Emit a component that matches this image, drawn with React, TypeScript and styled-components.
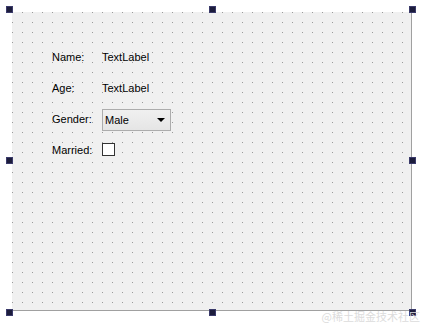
import styled, { createGlobalStyle } from 'styled-components';

const Global = createGlobalStyle`
  html, body {
    margin: 0;
    padding: 0;
    background: #ffffff;
  }
  body {
    font-family: "Liberation Sans", Arial, sans-serif;
    font-size: 11px;
    color: #000;
  }
`;

const Stage = styled.div`
  width: 426px;
  height: 323px;
  position: relative;
  box-sizing: border-box;
  padding: 12px 14px 12px 12px;
  background: #ffffff;
  overflow: hidden;
`;

const Canvas = styled.div`
  width: 400px;
  height: 299px;
  box-sizing: border-box;
  background-color: #f0f0f0;
  background-image: conic-gradient(at 1px 1px, transparent 270deg, #9a9a9a 270deg);
  background-size: 10px 10px;
  background-position: 0 0;
  border-right: 1px solid #a0a0a0;
  border-bottom: 1px solid #a0a0a0;
  padding: 29px 0 0 40px;
`;

const Handle = styled.div<{ $x: number; $y: number }>`
  position: absolute;
  left: ${p => p.$x}px;
  top: ${p => p.$y}px;
  width: 7px;
  height: 7px;
  box-sizing: border-box;
  background: #1c1c3c;
  border: 1px solid #3a3a6a;
`;

const Form = styled.div`
  display: grid;
  grid-template-columns: 50px auto;
  grid-auto-rows: 31px;
  align-items: center;
`;

const Label = styled.span`
  line-height: 14px;
  white-space: nowrap;
`;

const Field = styled.div`
  display: flex;
  align-items: center;
`;

const Combo = styled.div`
  width: 69px;
  height: 22px;
  box-sizing: border-box;
  border: 1px solid #acacac;
  background: linear-gradient(#f0f0f0, #e5e5e5);
  display: flex;
  align-items: center;
  justify-content: space-between;
  padding: 0 5px 0 2px;
  margin-top: 3px;
`;

const Arrow = styled.span`
  width: 0;
  height: 0;
  border-left: 4px solid transparent;
  border-right: 4px solid transparent;
  border-top: 4px solid #000;
`;

const Check = styled.div`
  width: 13px;
  height: 13px;
  box-sizing: border-box;
  border: 1px solid #333;
  background: #fff;
`;

const Watermark = styled.div`
  position: absolute;
  right: 6px;
  bottom: 0;
  font-family: "Noto Sans CJK SC", sans-serif;
  font-size: 11px;
  color: #dcdcdc;
  line-height: 13px;
`;

const handles = [
  [6, 6], [209, 6], [409, 6],
  [6, 157], [409, 157],
  [6, 309], [209, 309], [409, 309],
];

export default function App() {
  return (
    <Stage>
      <Global />
      <Canvas>
        <Form>
          <Label>Name:</Label>
          <Label>TextLabel</Label>
          <Label>Age:</Label>
          <Label>TextLabel</Label>
          <Label>Gender:</Label>
          <Field>
            <Combo>
              <Label>Male</Label>
              <Arrow />
            </Combo>
          </Field>
          <Label>Married:</Label>
          <Field>
            <Check />
          </Field>
        </Form>
      </Canvas>
      {handles.map(([x, y], i) => (
        <Handle key={i} $x={x} $y={y} />
      ))}
      <Watermark>@稀土掘金技术社区</Watermark>
    </Stage>
  );
}
